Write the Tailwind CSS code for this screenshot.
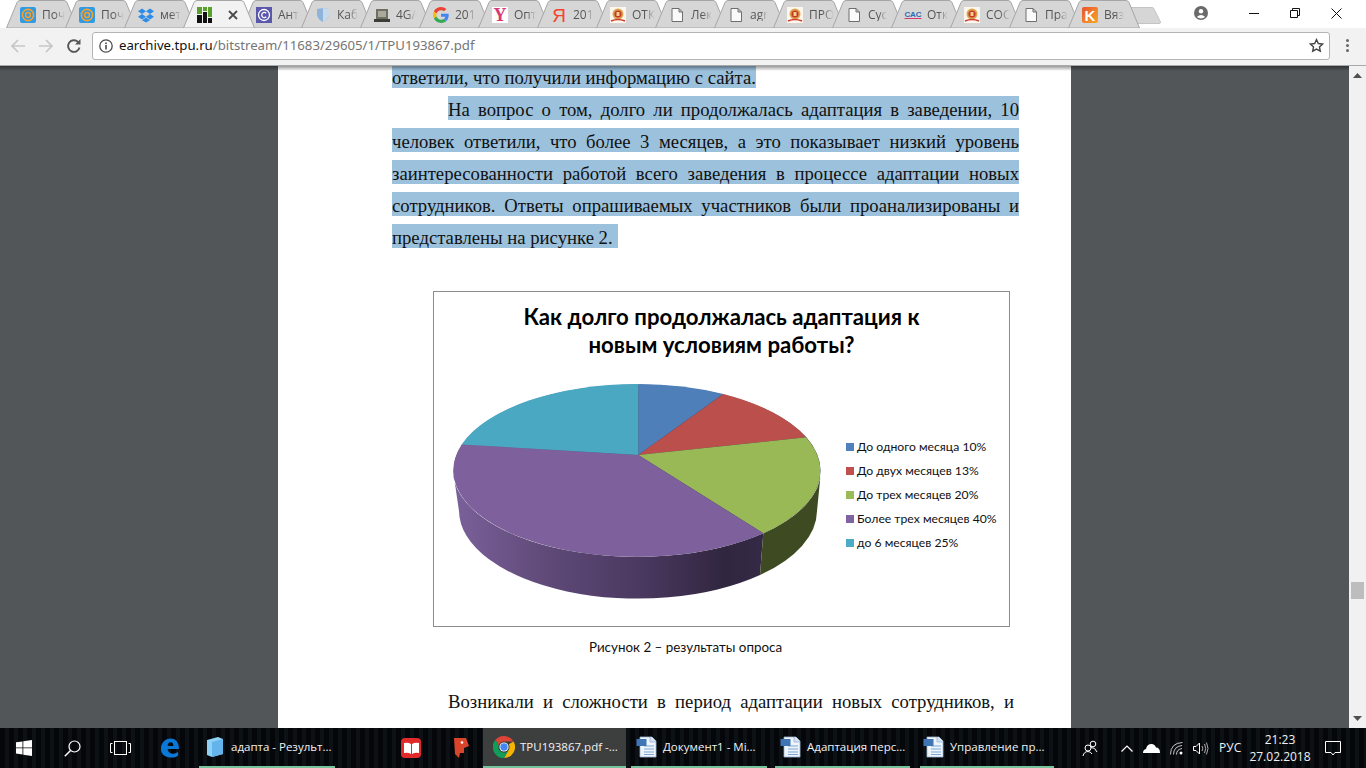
<!DOCTYPE html>
<html lang="ru">
<head>
<meta charset="utf-8">
<title>TPU193867.pdf</title>
<script src="https://cdn.jsdelivr.net/npm/@tailwindcss/browser@4"></script>
</head>
<body class="w-[1366px] h-[768px] overflow-hidden bg-white flex flex-col font-['Open_Sans','Noto_Sans',sans-serif]">
<svg width="0" height="0" class="absolute">
  <defs>
    <symbol id="tabshape" viewBox="0 0 72 28"><path d="M0.5 28 L11 2.5 Q12 0.5 14 0.5 L58 0.5 Q60 0.5 61 2.5 L71.5 28 Z" fill="#d6d6d6" stroke="#a6a6a6"/></symbol>
    <symbol id="tabactive" viewBox="0 0 72 28"><path d="M0.5 28 L11 2.5 Q12 0.5 14 0.5 L58 0.5 Q60 0.5 61 2.5 L71.5 28 Z" fill="#f2f2f2" stroke="#a6a6a6"/></symbol>
    <symbol id="mail" viewBox="0 0 16 16"><rect width="16" height="16" rx="2" fill="#2f9be6"/><circle cx="8" cy="8" r="5.6" fill="none" stroke="#f9a02b" stroke-width="1.6"/><circle cx="8" cy="8" r="2.4" fill="none" stroke="#f9a02b" stroke-width="1.5"/></symbol>
    <symbol id="doc" viewBox="0 0 16 16"><path d="M3 1.5H10L13.5 5V14.5H3Z M10 1.5V5H13.5" fill="#fafafa" stroke="#6e6e6e"/></symbol>
    <symbol id="seal" viewBox="0 0 16 16"><rect width="16" height="16" fill="#fdf6ec"/><circle cx="8" cy="7" r="5.5" fill="#d9a64f"/><circle cx="8" cy="7" r="3.6" fill="#c9352b"/><rect x="6.5" y="5" width="3" height="4" fill="#f0d28a"/><path d="M1 14 Q8 11 15 14" fill="none" stroke="#d23b30" stroke-width="1.5"/></symbol>
    <symbol id="word" viewBox="0 0 22 22"><path d="M4 1H16L20 5V21H4Z" fill="#eef4fb" stroke="#9db6d3" stroke-width=".8"/><path d="M14 1V6H20" fill="#cfe0f2" stroke="#9db6d3" stroke-width=".8"/><path d="M8 10H18M8 13H18M8 16H18M8 18.5H18" stroke="#7ea6d3"/><rect x="0.5" y="3" width="10" height="7" fill="#3f74b5"/></symbol>
  </defs>
</svg>

<!-- tab strip -->
<div class="h-[28px] shrink-0 flex items-stretch pl-[6px] text-[12px] text-[#555] bg-white leading-none">
  <div class="relative w-[72px] h-[28px] -mr-[13px] flex items-center shrink-0"><svg class="absolute inset-0" width="72" height="28"><use href="#tabshape"/></svg><svg class="relative ml-[14px] mt-[2px]" width="16" height="16"><use href="#mail"/></svg><span class="relative ml-[6px] whitespace-nowrap mt-[2px] [mask-image:linear-gradient(90deg,#000_55%,transparent)]">Поч</span></div>
  <div class="relative w-[72px] h-[28px] -mr-[13px] flex items-center shrink-0"><svg class="absolute inset-0" width="72" height="28"><use href="#tabshape"/></svg><svg class="relative ml-[14px] mt-[2px]" width="16" height="16"><use href="#mail"/></svg><span class="relative ml-[6px] whitespace-nowrap mt-[2px] [mask-image:linear-gradient(90deg,#000_55%,transparent)]">Поч</span></div>
  <div class="relative w-[72px] h-[28px] -mr-[13px] flex items-center shrink-0"><svg class="absolute inset-0" width="72" height="28"><use href="#tabshape"/></svg><svg class="relative ml-[14px] mt-[2px]" width="16" height="16" viewBox="0 0 16 16"><path d="M4 1.5L8 4.2 4 7 0 4.2ZM12 1.5L16 4.2 12 7 8 4.2ZM4 7L8 9.8 4 12.5 0 9.8ZM12 7L16 9.8 12 12.5 8 9.8ZM4 13.2L8 10.6 12 13.2 8 15.6Z" fill="#2d8ce6"/></svg><span class="relative ml-[6px] whitespace-nowrap mt-[2px] [mask-image:linear-gradient(90deg,#000_55%,transparent)]">мет</span></div>
  <div class="relative z-10 w-[72px] h-[28px] -mr-[13px] flex items-center shrink-0"><svg class="absolute inset-0" width="72" height="28"><use href="#tabactive"/></svg><svg class="relative ml-[14px] mt-[2px]" width="16" height="16" viewBox="0 0 16 16"><rect width="5" height="7" fill="#5aa02c"/><rect x="6" width="4" height="4" fill="#5aa02c"/><rect x="11" width="4" height="10" fill="#5aa02c"/><rect y="8" width="5" height="8" fill="#111"/><rect x="6" y="5" width="4" height="11" fill="#111"/><rect x="11" y="11" width="4" height="5" fill="#111"/></svg><svg class="relative ml-[15px] mt-[2px]" width="10" height="10" viewBox="0 0 10 10"><path d="M1 1L9 9M9 1L1 9" stroke="#4a4a4a" stroke-width="1.8"/></svg></div>
  <div class="relative w-[72px] h-[28px] -mr-[13px] flex items-center shrink-0"><svg class="absolute inset-0" width="72" height="28"><use href="#tabshape"/></svg><svg class="relative ml-[14px] mt-[2px]" width="16" height="16" viewBox="0 0 16 16"><rect width="16" height="16" fill="#5b57ad"/><circle cx="8" cy="8" r="5.5" fill="none" stroke="#fff" stroke-width="1.3"/><path d="M10.2 6.2A2.6 2.6 0 1 0 10.2 9.8" fill="none" stroke="#fff" stroke-width="1.3"/></svg><span class="relative ml-[6px] whitespace-nowrap mt-[2px] [mask-image:linear-gradient(90deg,#000_55%,transparent)]">Ант</span></div>
  <div class="relative w-[72px] h-[28px] -mr-[13px] flex items-center shrink-0"><svg class="absolute inset-0" width="72" height="28"><use href="#tabshape"/></svg><svg class="relative ml-[14px] mt-[2px]" width="16" height="16" viewBox="0 0 16 16"><path d="M2 2L8 1 14 2V8Q13 13 8 15 3 13 2 8Z" fill="#8fb4dc"/><path d="M8 1L14 2V8Q13 13 8 15Z" fill="#c9d9ea"/></svg><span class="relative ml-[6px] whitespace-nowrap mt-[2px] [mask-image:linear-gradient(90deg,#000_55%,transparent)]">Каб</span></div>
  <div class="relative w-[72px] h-[28px] -mr-[13px] flex items-center shrink-0"><svg class="absolute inset-0" width="72" height="28"><use href="#tabshape"/></svg><svg class="relative ml-[14px] mt-[2px]" width="16" height="16" viewBox="0 0 16 16"><rect x="2" y="2" width="12" height="10" fill="#6f6f64"/><rect x="4" y="4" width="8" height="6" fill="#a9a99c"/><rect y="12" width="16" height="3" fill="#3e3e38"/></svg><span class="relative ml-[6px] whitespace-nowrap mt-[2px] [mask-image:linear-gradient(90deg,#000_55%,transparent)]">4G/</span></div>
  <div class="relative w-[72px] h-[28px] -mr-[13px] flex items-center shrink-0"><svg class="absolute inset-0" width="72" height="28"><use href="#tabshape"/></svg><svg class="relative ml-[14px] mt-[2px]" width="16" height="16" viewBox="0 0 48 48"><path fill="#ea4335" d="M24 9.5c3.5 0 6.7 1.2 9.2 3.6l6.9-6.9C35.9 2.4 30.5 0 24 0 14.600 0 6.500 5.400 2.600 13.200l8 6.200C12.500 13.700 17.800 9.500 24 9.500z"/><path fill="#4285f4" d="M47 24.500c0-1.600-.1-3.100-.4-4.500H24v9h13c-.6 3-2.300 5.500-4.800 7.200l7.700 6c4.500-4.200 7.100-10.300 7.100-17.700z"/><path fill="#fbbc05" d="M10.600 28.600c-.5-1.400-.8-3-.8-4.600s.3-3.200.8-4.600l-8-6.200C.9 16.500 0 20.100 0 24s.9 7.500 2.600 10.800z"/><path fill="#34a853" d="M24 48c6.500 0 11.900-2.100 15.900-5.800l-7.700-6c-2.200 1.400-4.900 2.300-8.200 2.300-6.200 0-11.500-4.200-13.400-9.900l-8 6.200C6.500 42.600 14.600 48 24 48z"/></svg><span class="relative ml-[6px] whitespace-nowrap mt-[2px] [mask-image:linear-gradient(90deg,#000_55%,transparent)]">201</span></div>
  <div class="relative w-[72px] h-[28px] -mr-[13px] flex items-center shrink-0"><svg class="absolute inset-0" width="72" height="28"><use href="#tabshape"/></svg><span class="relative ml-[14px] mt-[2px] w-[16px] h-[16px] bg-white flex items-center justify-center font-['Liberation_Serif',serif] font-bold text-[18px] text-[#d8396e]">Y</span><span class="relative ml-[6px] whitespace-nowrap mt-[2px] [mask-image:linear-gradient(90deg,#000_55%,transparent)]">Опт</span></div>
  <div class="relative w-[72px] h-[28px] -mr-[13px] flex items-center shrink-0"><svg class="absolute inset-0" width="72" height="28"><use href="#tabshape"/></svg><span class="relative ml-[14px] mt-[2px] w-[16px] h-[16px] flex items-center justify-center font-['Liberation_Sans',sans-serif] text-[19px] text-[#f4442e]">Я</span><span class="relative ml-[6px] whitespace-nowrap mt-[2px] [mask-image:linear-gradient(90deg,#000_55%,transparent)]">201</span></div>
  <div class="relative w-[72px] h-[28px] -mr-[13px] flex items-center shrink-0"><svg class="absolute inset-0" width="72" height="28"><use href="#tabshape"/></svg><svg class="relative ml-[14px] mt-[2px]" width="16" height="16"><use href="#seal"/></svg><span class="relative ml-[6px] whitespace-nowrap mt-[2px] [mask-image:linear-gradient(90deg,#000_55%,transparent)]">ОТК</span></div>
  <div class="relative w-[72px] h-[28px] -mr-[13px] flex items-center shrink-0"><svg class="absolute inset-0" width="72" height="28"><use href="#tabshape"/></svg><svg class="relative ml-[14px] mt-[2px]" width="16" height="16"><use href="#doc"/></svg><span class="relative ml-[6px] whitespace-nowrap mt-[2px] [mask-image:linear-gradient(90deg,#000_55%,transparent)]">Лек</span></div>
  <div class="relative w-[72px] h-[28px] -mr-[13px] flex items-center shrink-0"><svg class="absolute inset-0" width="72" height="28"><use href="#tabshape"/></svg><svg class="relative ml-[14px] mt-[2px]" width="16" height="16"><use href="#doc"/></svg><span class="relative ml-[6px] whitespace-nowrap mt-[2px] [mask-image:linear-gradient(90deg,#000_55%,transparent)]">agr</span></div>
  <div class="relative w-[72px] h-[28px] -mr-[13px] flex items-center shrink-0"><svg class="absolute inset-0" width="72" height="28"><use href="#tabshape"/></svg><svg class="relative ml-[14px] mt-[2px]" width="16" height="16"><use href="#seal"/></svg><span class="relative ml-[6px] whitespace-nowrap mt-[2px] [mask-image:linear-gradient(90deg,#000_55%,transparent)]">ПРО</span></div>
  <div class="relative w-[72px] h-[28px] -mr-[13px] flex items-center shrink-0"><svg class="absolute inset-0" width="72" height="28"><use href="#tabshape"/></svg><svg class="relative ml-[14px] mt-[2px]" width="16" height="16"><use href="#doc"/></svg><span class="relative ml-[6px] whitespace-nowrap mt-[2px] [mask-image:linear-gradient(90deg,#000_55%,transparent)]">Сус</span></div>
  <div class="relative w-[72px] h-[28px] -mr-[13px] flex items-center shrink-0"><svg class="absolute inset-0" width="72" height="28"><use href="#tabshape"/></svg><span class="relative ml-[14px] mt-[2px] w-[16px] h-[16px] flex items-center justify-center font-['Liberation_Sans',sans-serif] font-bold text-[8px] text-[#2a6bb8] underline decoration-[#d8396e]">САС</span><span class="relative ml-[6px] whitespace-nowrap mt-[2px] [mask-image:linear-gradient(90deg,#000_55%,transparent)]">Отк</span></div>
  <div class="relative w-[72px] h-[28px] -mr-[13px] flex items-center shrink-0"><svg class="absolute inset-0" width="72" height="28"><use href="#tabshape"/></svg><svg class="relative ml-[14px] mt-[2px]" width="16" height="16"><use href="#seal"/></svg><span class="relative ml-[6px] whitespace-nowrap mt-[2px] [mask-image:linear-gradient(90deg,#000_55%,transparent)]">СОС</span></div>
  <div class="relative w-[72px] h-[28px] -mr-[13px] flex items-center shrink-0"><svg class="absolute inset-0" width="72" height="28"><use href="#tabshape"/></svg><svg class="relative ml-[14px] mt-[2px]" width="16" height="16"><use href="#doc"/></svg><span class="relative ml-[6px] whitespace-nowrap mt-[2px] [mask-image:linear-gradient(90deg,#000_55%,transparent)]">Пра</span></div>
  <div class="relative w-[72px] h-[28px] -mr-[13px] flex items-center shrink-0"><svg class="absolute inset-0" width="72" height="28"><use href="#tabshape"/></svg><span class="relative ml-[14px] mt-[2px] w-[16px] h-[16px] rounded-[2px] flex items-center justify-center bg-gradient-to-br from-[#e8502f] to-[#f6a623] font-['Liberation_Sans',sans-serif] font-bold text-[15px] text-white">K</span><span class="relative ml-[6px] whitespace-nowrap mt-[2px] [mask-image:linear-gradient(90deg,#000_55%,transparent)]">Вяз</span></div>
  <div class="ml-[1px] mt-[7px] w-[33px] h-[17px] shrink-0"><svg width="33" height="17" viewBox="0 0 33 17"><path d="M1 0.500H24Q25.500 .5 26 2L32.500 15Q32.500 16.500 31 16.500H8Q6.500 16.500 6 15L.5 2Q.5 .5 1 .5Z" fill="#d6d6d6" stroke="#c4c4c4"/></svg></div>
  <div class="ml-[33px] mt-[6px] shrink-0 h-[14px]"><svg width="14" height="14" viewBox="0 0 14 14"><circle cx="7" cy="7" r="7" fill="#6a6a6a"/><circle cx="7" cy="5.200" r="2.200" fill="#fff"/><path d="M2.800 11Q7 6.800 11.200 11Q7 13.800 2.800 11Z" fill="#fff"/></svg></div>
  <div class="ml-[41px] mt-[13px] shrink-0 w-[10px] h-[1px] bg-[#111]"></div>
  <div class="ml-[31px] mt-[8px] shrink-0 h-[10px]"><svg width="10" height="10" viewBox="0 0 10 10"><path d="M.5 2.500H7.500V9.500H.5ZM2.500 2.500V.5H9.500V7.500H7.500" fill="none" stroke="#111"/></svg></div>
  <div class="ml-[31px] mt-[8px] shrink-0 h-[10px]"><svg width="11" height="11" viewBox="0 0 11 11"><path d="M.5 .5L10.500 10.500M10.500 .5L.5 10.500" stroke="#111"/></svg></div>
</div>

<!-- toolbar -->
<div class="relative z-20 h-[38px] shrink-0 bg-[#f2f2f2] border-b border-[#a9a9a9] flex items-center pl-[10px] pb-[2px]">
  <svg width="16" height="16" viewBox="0 0 16 16" class="shrink-0"><path d="M15 8H2M8 2L2 8l6 6" fill="none" stroke="#c6c6c6" stroke-width="1.700"/></svg>
  <svg width="16" height="16" viewBox="0 0 16 16" class="ml-[12px] shrink-0"><path d="M1 8H14M8 2l6 6-6 6" fill="none" stroke="#c6c6c6" stroke-width="1.700"/></svg>
  <svg width="16" height="16" viewBox="0 0 16 16" class="ml-[12px] shrink-0"><path d="M13.500 9.500A5.800 5.800 0 1 1 12 4" fill="none" stroke="#555" stroke-width="1.900"/><path d="M14.500 1V6.500H9Z" fill="#555"/></svg>
  <div class="ml-[10px] w-[1238px] h-[28px] bg-white border border-[#b4b4b4] rounded-[3px] flex items-center pl-[6px] pr-[5px] shrink-0">
    <svg width="14" height="14" viewBox="0 0 14 14" class="shrink-0"><circle cx="7" cy="7" r="6.200" fill="none" stroke="#4a4a4a" stroke-width="1.300"/><rect x="6.200" y="6" width="1.600" height="4.500" fill="#4a4a4a"/><rect x="6.200" y="3.500" width="1.600" height="1.600" fill="#4a4a4a"/></svg>
    <span class="ml-[6px] text-[13.2px] leading-none text-[#757575] whitespace-nowrap font-['Noto_Sans',sans-serif]"><span class="text-[#111]">earchive.tpu.ru</span>/bitstream/11683/29605/1/TPU193867.pdf</span>
    <svg width="15" height="15" viewBox="0 0 24 24" class="ml-auto shrink-0"><path d="M12 2.500l2.900 6.300 6.900.8-5.100 4.700 1.400 6.800L12 17.700l-6.100 3.400 1.400-6.800L2.200 9.600l6.900-.8z" fill="none" stroke="#444" stroke-width="2.200"/></svg>
  </div>
  <div class="ml-[16px] flex flex-col gap-[2px] shrink-0"><i class="block w-[3px] h-[3px] bg-[#666] rounded-full"></i><i class="block w-[3px] h-[3px] bg-[#666] rounded-full"></i><i class="block w-[3px] h-[3px] bg-[#666] rounded-full"></i></div>
</div>

<!-- viewer -->
<div class="flex-1 min-h-0 flex bg-[#525659] overflow-hidden">
  <div class="w-[1349px] flex justify-center shrink-0 relative">
    <div class="absolute inset-x-0 top-0 h-[5px] bg-gradient-to-b from-black/40 to-transparent z-10"></div>
    <div class="w-[793px] h-[662px] bg-white overflow-hidden pl-[114px] font-['Liberation_Serif',serif] text-[18.7px] text-[#111] leading-[24px] shrink-0">
      <div class="-mt-[2px] leading-[27px]">
        <div class="w-[364px] bg-[#9cc1dc] whitespace-nowrap h-[24px]">ответили, что получили информацию с сайта.</div>
        <div class="ml-[56px] mt-[8px] w-[571px] bg-[#9cc1dc] h-[24px] text-justify [text-align-last:justify]">На вопрос о том, долго ли продолжалась адаптация в заведении, 10</div>
        <div class="mt-[8px] w-[627px] bg-[#9cc1dc] h-[24px] text-justify [text-align-last:justify]">человек ответили, что более 3 месяцев, а это показывает низкий уровень</div>
        <div class="mt-[8px] w-[627px] bg-[#9cc1dc] h-[24px] text-justify [text-align-last:justify]">заинтересованности работой всего заведения в процессе адаптации новых</div>
        <div class="mt-[8px] w-[627px] bg-[#9cc1dc] h-[24px] text-justify [text-align-last:justify]">сотрудников. Ответы опрашиваемых участников были проанализированы и</div>
        <div class="mt-[8px] w-[226px] bg-[#9cc1dc] h-[24px] whitespace-pre">представлены на рисунке 2. </div>
      </div>

      <div class="ml-[41px] mt-[43px] w-[577px] h-[336px] border border-[#8c8c8c] font-['Lato','Open_Sans',sans-serif] flex flex-col">
        <div class="pt-[11px] text-center text-[#000] font-bold text-[22.2px] leading-[28px] h-[67px] shrink-0">Как долго продолжалась адаптация к<br>новым условиям работы?</div>
        <div class="flex mt-[20px]">
          <svg class="ml-[16px] shrink-0" width="380" height="225" viewBox="450 379 380 225">
            <defs>
              <linearGradient id="side" gradientUnits="userSpaceOnUse" x1="453" y1="0" x2="763" y2="0">
                <stop offset="0" stop-color="#7b619a"/><stop offset=".3" stop-color="#5f4a78"/><stop offset=".6" stop-color="#4b3961"/><stop offset=".88" stop-color="#30263f"/><stop offset="1" stop-color="#352a46"/>
              </linearGradient>
            </defs>
            <ellipse cx="637" cy="470.500" rx="183.500" ry="86" fill="url(#side)"/>
            <path d="M453 470.500A184 86.500 0 0 0 763.300 533.300L760 575A179 88 0 0 1 459 511Z" fill="url(#side)"/>
            <path d="M763.300 533.300A184 86.500 0 0 0 821 470.500L817 511A179 88 0 0 1 760 575Z" fill="#3e4a22"/>
            <path d="M638.300 455V384A184 86.500 0 0 1 723.300 394Z" fill="#4e7fb9"/>
            <path d="M638.300 455L723.300 394A184 86.500 0 0 1 806 437.300Z" fill="#bb4f4c"/>
            <path d="M638.300 455L806 437.300A184 86.500 0 0 1 763.300 533.300Z" fill="#99b957"/>
            <path d="M638.300 455L763.300 533.300A184 86.500 0 0 1 461.700 444.500Z" fill="#7d609c"/>
            <path d="M638.300 455L461.700 444.500A184 86.500 0 0 1 638.300 384Z" fill="#4aa8c2"/>
          </svg>
          <div class="ml-[16px] mt-[56px] text-[12.2px] leading-[24px] text-[#111] whitespace-nowrap">
            <div class="flex items-center"><i class="block w-[8px] h-[8px] bg-[#4f81bd] mr-[3px]"></i>До одного месяца 10%</div>
            <div class="flex items-center"><i class="block w-[8px] h-[8px] bg-[#c0504d] mr-[3px]"></i>До двух месяцев 13%</div>
            <div class="flex items-center"><i class="block w-[8px] h-[8px] bg-[#9bbb59] mr-[3px]"></i>До трех месяцев 20%</div>
            <div class="flex items-center"><i class="block w-[8px] h-[8px] bg-[#8064a2] mr-[3px]"></i>Более трех месяцев 40%</div>
            <div class="flex items-center"><i class="block w-[8px] h-[8px] bg-[#4bacc6] mr-[3px]"></i>до 6 месяцев 25%</div>
          </div>
        </div>
      </div>

      <div class="mt-[10px] ml-[197px] text-[13.4px] leading-[20px] font-['Lato','Open_Sans',sans-serif] whitespace-nowrap">Рисунок 2 – результаты опроса</div>
      <div class="ml-[56px] mt-[33px] w-[566px] h-[24px] text-justify [text-align-last:justify]">Возникали и сложности в период адаптации новых сотрудников, и</div>
    </div>
  </div>
  <div class="w-[17px] shrink-0 bg-[#f1f1f1] flex flex-col items-center relative">
    <svg width="9" height="5" viewBox="0 0 9 5" class="mt-[7px]"><path d="M4.500 0L9 5H0Z" fill="#505050"/></svg>
    <div class="w-[13px] h-[17px] bg-[#bdbdbd] mt-[504px]"></div>
    <svg width="9" height="5" viewBox="0 0 9 5" class="mt-auto mb-[7px]"><path d="M0 0H9L4.500 5Z" fill="#505050"/></svg>
  </div>
</div>

<!-- taskbar -->
<div class="h-[40px] shrink-0 flex items-stretch text-[12px] text-[#f2f2f2] bg-[repeating-linear-gradient(90deg,#04060a_0,#04060a_5px,#0c1116_5px,#0c1116_9px)] font-['Open_Sans','Noto_Sans',sans-serif]">
  <div class="w-[48px] flex items-center justify-center shrink-0"><svg width="16" height="16" viewBox="0 0 16 16"><path d="M0 2.300L6.500 1.400V7.500H0ZM7.300 1.300L16 0V7.500H7.300ZM0 8.300H6.500V14.500L0 13.600ZM7.300 8.300H16V16L7.300 14.700Z" fill="#fff"/></svg></div>
  <div class="w-[48px] flex items-center justify-center shrink-0"><svg width="17" height="17" viewBox="0 0 17 17"><circle cx="10.500" cy="6.500" r="5.500" fill="none" stroke="#fff" stroke-width="1.200"/><path d="M6.500 10.500L.8 16.200" stroke="#fff" stroke-width="1.500"/></svg></div>
  <div class="w-[48px] flex items-center justify-center shrink-0"><svg width="21" height="14" viewBox="0 0 21 14"><rect x="4.500" y=".5" width="12" height="13" fill="none" stroke="#fff"/><path d="M2.500 2.500H.5V11.500H2.500M18.500 2.500H20.500V11.500H18.500" fill="none" stroke="#fff"/></svg></div>
  <div class="w-[52px] flex items-center justify-center shrink-0"><svg width="20" height="22" viewBox="0 0 21 22"><path fill-rule="evenodd" fill="#0a78d7" d="M1 12C1 5 6 1 11 1 17 1 20 6 20 12H8C8 15 11 17 14 17 16 17 18 16 19 15V19C17 21 15 21 12 21 6 21 1 18 1 12ZM8 9H14C14 6 13 5 11 5 9 5 8 7 8 9Z"/></svg></div>
  <div class="w-[136px] ml-[3px] flex items-center shrink-0 border-b-2 border-[#76c29a] pb-[1px] text-[11.5px]"><svg class="ml-[8px] mr-[8px] shrink-0" width="16" height="20" viewBox="0 0 16 20"><path d="M0 3L11 0 16 2V17L5 20 0 18Z" fill="#8fd0f5"/><path d="M5 5L16 2V17L5 20Z" fill="#62b4ea"/></svg><span class="whitespace-nowrap">адапта - Результ...</span></div>
  <div class="w-[52px] ml-[66px] flex items-center shrink-0"><span class="w-[20px] h-[20px] rounded-[4px] bg-[#e12a2a] flex items-center justify-center"><svg width="15" height="12" viewBox="0 0 15 12"><path d="M0 1Q4 0 7 2V12Q4 10 0 11ZM15 1Q11 0 8 2V12Q11 10 15 11Z" fill="#fff"/></svg></span></div>
  <div class="w-[32px] -ml-[2px] flex items-center shrink-0"><svg width="20" height="22" viewBox="0 0 20 22"><path d="M3 1H15L18 9 13 11V16H9L8 21 4 17Z" fill="#d8452a"/><circle cx="11" cy="5.500" r="1.300" fill="#fff"/></svg></div>
  <div class="w-[143px] flex items-center shrink-0 bg-[#3d3f3e] border-b-2 border-[#76c29a] pb-[1px] text-[11.5px]"><svg class="ml-[10px] mr-[5px] shrink-0" width="22" height="22" viewBox="0 0 48 48"><path fill="#db4437" d="M24 0a24 24 0 0 1 20.800 12H24a12 12 0 0 0-11.500 8.500L5.400 8.300A24 24 0 0 1 24 0z"/><path fill="#f4b400" d="M44.800 12A24 24 0 0 1 24 48l10.400-18A12 12 0 0 0 34.400 18z"/><path fill="#0f9d58" d="M5.400 8.300A24 24 0 0 0 24 48l10.400-18a12 12 0 0 1-21.900-9.500z"/><circle cx="24" cy="24" r="10" fill="#fff"/><circle cx="24" cy="24" r="8" fill="#4285f4"/></svg><span class="whitespace-nowrap">TPU193867.pdf -...</span></div>
  <div class="w-[136px] ml-[5px] flex items-center shrink-0 border-b-2 border-[#76c29a] pb-[1px] text-[11.5px]"><svg class="ml-[5px] mr-[5px] shrink-0" width="22" height="22"><use href="#word"/></svg><span class="whitespace-nowrap">Документ1 - Mi...</span></div>
  <div class="w-[135px] ml-[8px] flex items-center shrink-0 border-b-2 border-[#76c29a] pb-[1px] text-[11.5px]"><svg class="ml-[5px] mr-[5px] shrink-0" width="22" height="22"><use href="#word"/></svg><span class="whitespace-nowrap">Адаптация перс...</span></div>
  <div class="w-[134px] ml-[10px] flex items-center shrink-0 border-b-2 border-[#76c29a] pb-[1px] text-[11.5px]"><svg class="ml-[3px] mr-[5px] shrink-0" width="22" height="22"><use href="#word"/></svg><span class="whitespace-nowrap">Управление пр...</span></div>
  <div class="ml-[28px] flex items-center shrink-0"><svg width="16" height="16" viewBox="0 0 16 16"><circle cx="6" cy="8" r="3" fill="none" stroke="#fff"/><circle cx="11" cy="4" r="2.800" fill="none" stroke="#fff"/><path d="M1 16Q2 11.500 6 11.500 8.500 11.500 10 14M9 7.500Q13 7 15 12" fill="none" stroke="#fff"/></svg></div>
  <div class="ml-[23px] flex items-center shrink-0"><svg width="12" height="7" viewBox="0 0 12 7"><path d="M.5 6.500L6 1l5.500 5.500" fill="none" stroke="#fff" stroke-width="1.200"/></svg></div>
  <div class="ml-[10px] flex items-center shrink-0"><svg width="17" height="10" viewBox="0 0 17 10"><path d="M0 10Q0 6.500 3 6 4 1 8.500 1 12 1 13 4.500 17 4.500 17 10Z" fill="#fff"/></svg></div>
  <div class="ml-[10px] flex items-center shrink-0"><svg width="13" height="13" viewBox="0 0 13 13"><path d="M.5 12.500Q.5 1 12.500 .5M3.500 12.500Q3.500 4.500 12 3.500M6.500 12.500Q6.500 7.500 12 6.500" fill="none" stroke="#ddd" stroke-width=".9"/><circle cx="11" cy="11" r="1.500" fill="#fff"/></svg></div>
  <div class="ml-[10px] flex items-center shrink-0"><svg width="16" height="13" viewBox="0 0 16 13"><path d="M.5 4.500H3L6.500 1V12L3 8.500H.5Z" fill="none" stroke="#fff"/><path d="M9 4Q10.500 6.500 9 9M11.500 2Q14 6.500 11.500 11M13.500 .5Q16.500 6.500 13.500 12.500" fill="none" stroke="#aaa"/></svg></div>
  <div class="ml-[10px] flex items-center shrink-0 w-[32px] whitespace-nowrap">РУС</div>
  <div class="-ml-[3px] w-[64px] flex flex-col items-center justify-center shrink-0 leading-[17px] whitespace-nowrap"><span>21:23</span><span>27.02.2018</span></div>
  <div class="ml-[13px] flex items-center shrink-0"><svg width="16" height="15" viewBox="0 0 16 15"><path d="M.5 .5H15.500V11.500H10L8 14 6 11.500H.5Z" fill="none" stroke="#fff"/></svg></div>
</div>
</body>
</html>
